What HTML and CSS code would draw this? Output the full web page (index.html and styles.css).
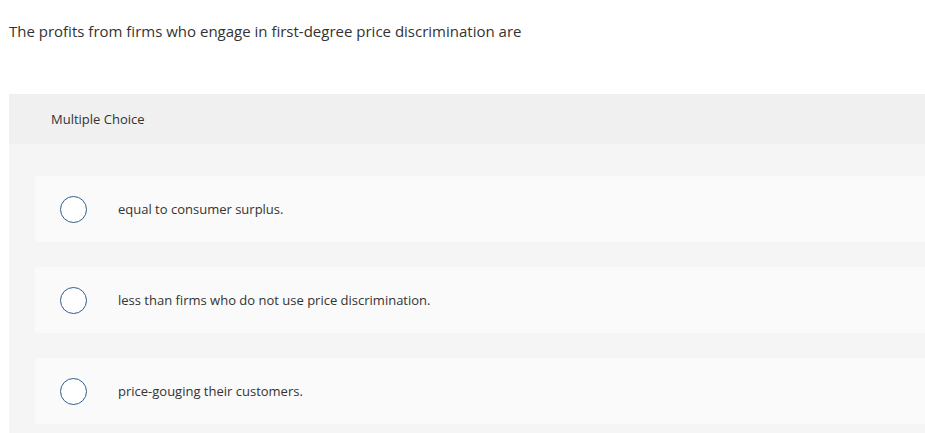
FILE: index.html
```html
<!DOCTYPE html>
<html>
<head>
<meta charset="utf-8">
<link rel="stylesheet" href="styles.css">
</head>
<body>
<div class="page">
  <p class="question">The profits from firms who engage in first-degree price discrimination are</p>
  <div class="mc">
    <div class="mc-header">Multiple Choice</div>
    <div class="mc-body">
      <div class="option"><span class="radio"></span><span class="label">equal to consumer surplus.</span></div>
      <div class="option"><span class="radio"></span><span class="label">less than firms who do not use price discrimination.</span></div>
      <div class="option"><span class="radio"></span><span class="label">price-gouging their customers.</span></div>
    </div>
  </div>
</div>
</body>
</html>
```
FILE: styles.css
```css
html, body { margin: 0; padding: 0; background: #fff; overflow: hidden; }
body { font-family: "Open Sans", "Liberation Sans", Arial, sans-serif; color: #333; }
.page { padding-left: 9px; }
.question { margin: 0; padding-top: 22px; font-size: 15px; line-height: 19px; color: #333; }
.mc { margin-top: 53px; width: 940px; background: #f5f5f5; }
.mc-header { background: #f0f0f0; height: 50px; display: flex; align-items: center; padding-left: 42px; font-size: 13px; color: #333; }
.mc-body { padding: 32px 0 10px 26px; display: flex; flex-direction: column; gap: 25px; }
.option { background: #fafafa; height: 66px; border-radius: 3px; display: flex; align-items: center; padding-left: 25px; }
.radio { width: 25px; height: 25px; border: 1.5px solid #2f5d8c; border-radius: 50%; background: #fff; flex: none; }
.label { margin-left: 31px; font-size: 13px; color: #333; }
```
